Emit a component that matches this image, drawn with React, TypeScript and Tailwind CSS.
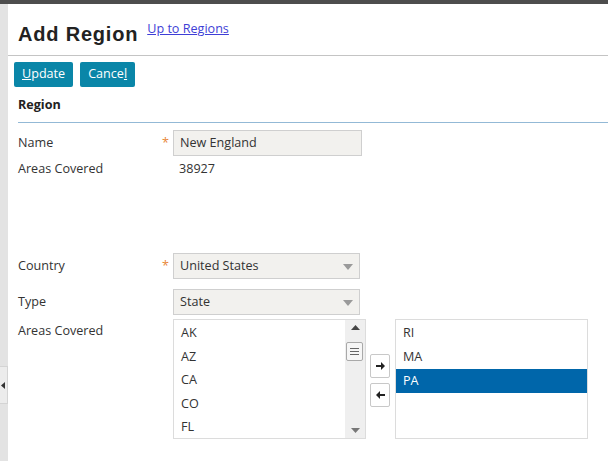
import { useState } from 'react'

const available = ['AK', 'AZ', 'CA', 'CO', 'FL']
const chosen = ['RI', 'MA', 'PA']

function Caret() {
  return (
    <svg width="10" height="6" viewBox="0 0 10 6" className="absolute right-[6px] top-[10px]">
      <path d="M0 0h10L5 6z" fill="#9a9a9a" />
    </svg>
  )
}

function Row({ label, required, children, className = '', labelClass = '' }: { label: string; required?: boolean; children: React.ReactNode; className?: string; labelClass?: string }) {
  return (
    <div className={`flex ${className}`}>
      <div className={`w-[144px] shrink-0 leading-[18px] ${labelClass}`}>{label}</div>
      <div className="w-[11px] shrink-0 text-[#e8873a]">{required ? '*' : ''}</div>
      <div className="flex-1">{children}</div>
    </div>
  )
}

export default function App() {
  const [selected, setSelected] = useState('PA')

  return (
    <div className="flex min-h-[461px] flex-col bg-white font-['Open_Sans',sans-serif] text-[12.6px] text-[#333]">
      <div className="h-[4px] bg-[#4d4d4d]" />
      <div className="flex flex-1">
        <div className="relative w-[8px] shrink-0 bg-[#e3e3e3]">
          <div className="absolute left-0 top-[362px] flex h-[38px] w-[8px] items-center border-y border-r border-[#d4d4d4] bg-[#ececec]">
            <svg width="4" height="7" viewBox="0 0 4 7" className="ml-[1px]">
              <path d="M4 0v7L0 3.5z" fill="#333" />
            </svg>
          </div>
        </div>
        <div className="flex-1">
          <div className="flex items-end gap-[9px] px-[10px] pt-[17px] pb-[9px]">
            <h1 className="font-['Liberation_Sans',Arial,sans-serif] text-[20px] font-bold leading-[24px] tracking-[0.8px] text-[#222]">Add Region</h1>
            <a href="#" className="mb-[9px] text-[12.6px] leading-[16px] text-[#3e3ed6] underline">Up to Regions</a>
          </div>
          <div className="h-px bg-[#c4c4c4]" />
          <div className="flex gap-[7px] px-[6px] pt-[6px]">
            <button className="h-[25px] rounded-[2px] bg-[#0a86a8] px-[8px] text-white">
              <span className="underline">U</span>pdate
            </button>
            <button className="h-[25px] rounded-[2px] bg-[#0a86a8] px-[8px] text-white">
              Cance<span className="underline">l</span>
            </button>
          </div>
          <div className="px-[10px] pt-[9px] font-bold leading-[18px] text-[#222]">Region</div>
          <div className="ml-[10px] mt-[8px] h-px bg-[#93b9d6]" />

          <div className="px-[10px]">
            <Row label="Name" required className="mt-[7px] items-center">
              <div className="flex h-[26px] w-[189px] items-center border border-[#cfcfcf] bg-[#f2f1ee] px-[6px]">New England</div>
            </Row>
            <Row label="Areas Covered" className="mt-[4px]">
              <div className="pl-[6px] leading-[18px]">38927</div>
            </Row>

            <Row label="Country" required className="mt-[75px] items-center">
              <div className="relative flex h-[26px] w-[187px] items-center border border-[#cfcfcf] bg-[#f2f1ee] px-[6px]">
                United States
                <Caret />
              </div>
            </Row>
            <Row label="Type" className="mt-[10px] items-center">
              <div className="relative flex h-[26px] w-[187px] items-center border border-[#cfcfcf] bg-[#f2f1ee] px-[6px]">
                State
                <Caret />
              </div>
            </Row>
            <Row label="Areas Covered" className="mt-[4px]" labelClass="pt-[3px]">
              <div className="flex items-start">
                <div className="flex h-[120px] w-[193px] overflow-hidden border border-[#dcdcdc]">
                  <ul className="flex-1 pt-[1px]">
                    {available.map((s) => (
                      <li key={s} className="h-[23.5px] pl-[7px] leading-[23.5px]">{s}</li>
                    ))}
                  </ul>
                  <div className="relative flex w-[20px] flex-col items-center justify-between bg-[#efefef] py-[5px]">
                    <svg width="9" height="5" viewBox="0 0 9 5"><path d="M0 5L4.5 0 9 5z" fill="#444" /></svg>
                    <div className="absolute left-[1px] top-[22px] flex h-[19px] w-[17px] flex-col items-center justify-center gap-[2px] rounded-[2px] border border-[#a9a9a9] bg-[#f6f6f6]">
                      <div className="h-px w-[9px] bg-[#666]" />
                      <div className="h-px w-[9px] bg-[#666]" />
                      <div className="h-px w-[9px] bg-[#666]" />
                    </div>
                    <svg width="9" height="5" viewBox="0 0 9 5"><path d="M0 0h9L4.5 5z" fill="#777" /></svg>
                  </div>
                </div>
                <div className="ml-[4px] mt-[35px] flex flex-col gap-[5px]">
                  <button className="flex h-[24px] w-[20px] items-center justify-center rounded-[2px] border border-[#c8c8c8] bg-white">
                    <svg width="9" height="8" viewBox="0 0 9 8"><path d="M0 3h5V0l4 4-4 4V5H0z" fill="#222" /></svg>
                  </button>
                  <button className="flex h-[24px] w-[20px] items-center justify-center rounded-[2px] border border-[#c8c8c8] bg-white">
                    <svg width="9" height="8" viewBox="0 0 9 8"><path d="M9 3H4V0L0 4l4 4V5h5z" fill="#222" /></svg>
                  </button>
                </div>
                <ul className="ml-[5px] h-[120px] w-[193px] border border-[#dcdcdc] pt-[1px]">
                  {chosen.map((s) => (
                    <li
                      key={s}
                      onClick={() => setSelected(s)}
                      className={s === selected ? 'h-[24px] bg-[#0066aa] pl-[7px] leading-[24px] text-white' : 'h-[24px] pl-[7px] leading-[24px]'}
                    >
                      {s}
                    </li>
                  ))}
                </ul>
              </div>
            </Row>
          </div>
        </div>
      </div>
    </div>
  )
}
